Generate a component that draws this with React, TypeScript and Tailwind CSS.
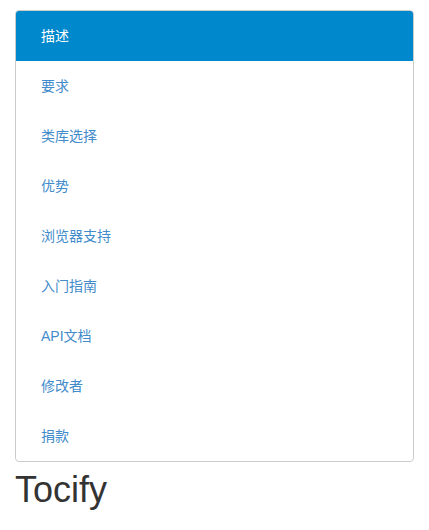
const ITEMS = ['描述', '要求', '类库选择', '优势', '浏览器支持', '入门指南', 'API文档', '修改者', '捐款'];

export default function App() {
  return (
    <div className="px-[15px] pt-[10px] font-['Liberation_Sans','Noto_Sans_CJK_SC',sans-serif] text-[#333]">
      <ul className="overflow-hidden rounded-[4px] border border-[#ccc] bg-white">
        {ITEMS.map((item, i) => (
          <li
            key={item}
            className={
              i === 0
                ? 'flex h-[50px] items-center bg-[#0088cc] pl-[25px] text-[14px] text-white'
                : 'flex h-[50px] items-center pl-[25px] text-[14px] text-[#428bca]'
            }
          >
            {item}
          </li>
        ))}
      </ul>
      <h1 className="mt-[6px] text-[36px] leading-[44px]">Tocify</h1>
    </div>
  );
}
